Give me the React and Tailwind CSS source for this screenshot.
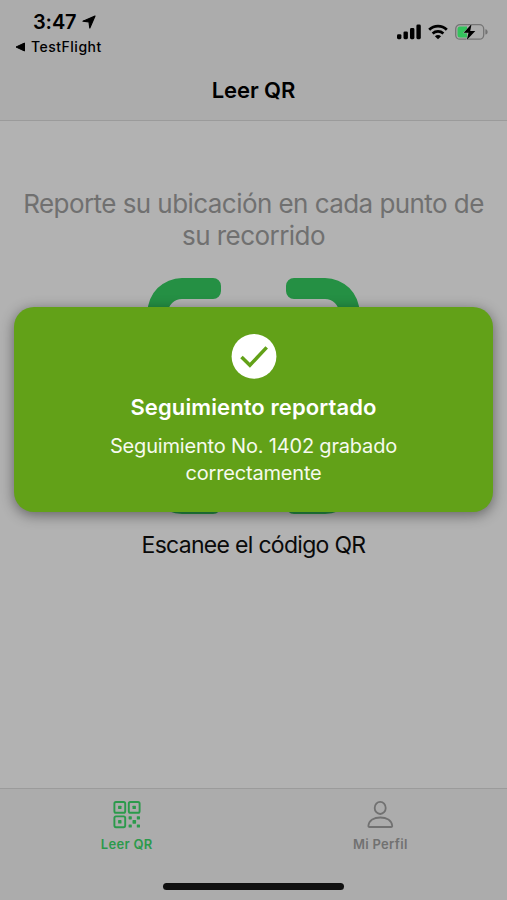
function StatusBar() {
  return (
    <div className="flex h-[60px] justify-between">
      <div className="pt-[10px] pl-[15px]">
        <div className="flex h-6 items-center gap-[5px] pl-[18px]">
          <span className="text-[20px] font-semibold tracking-[-0.1px]">3:47</span>
          <svg width="14" height="14" viewBox="0 0 14 14" className="mb-px">
            <path
              d="M13 1 L1 6.2 L7 7 L7.8 13 Z"
              fill="black"
              stroke="black"
              strokeWidth="1.2"
              strokeLinejoin="round"
            />
          </svg>
        </div>
        <div className="flex h-[25px] items-center gap-[5px]">
          <svg width="11" height="10" viewBox="0 0 11 10">
            <path d="M9.5 1 V9 L1 5 Z" fill="black" stroke="black" strokeLinejoin="round" />
          </svg>
          <span className="text-[14px] font-medium tracking-[0.5px]">TestFlight</span>
        </div>
      </div>
      <div className="flex h-[64px] items-center gap-[7px] pr-[19px]">
        <svg width="24" height="16" viewBox="0 0 24 16">
          <rect x="0" y="10.2" width="4.4" height="5" rx="1.4" />
          <rect x="6.5" y="7.4" width="4.4" height="7.8" rx="1.4" />
          <rect x="13" y="4" width="4.4" height="11.2" rx="1.4" />
          <rect x="19.4" y="0.5" width="4.4" height="14.7" rx="1.4" />
        </svg>
        <svg width="20" height="16" viewBox="0 0 20 16">
          <path d="M1.2 5.8 C6.2 1 13.8 1 18.8 5.8" fill="none" stroke="black" strokeWidth="2.8" />
          <path d="M4.6 9.5 C7.7 6.7 12.3 6.7 15.4 9.5" fill="none" stroke="black" strokeWidth="2.6" />
          <path d="M10 15.3 L6.9 12.2 Q10 9.8 13.1 12.2 Z" />
        </svg>
        <svg width="33" height="18" viewBox="0 0 33 18">
          <rect x="0.7" y="1.6" width="28" height="14.6" rx="4.3" fill="none" stroke="#747474" strokeWidth="1.3" />
          <path d="M30.4 6.2 C33.4 6.6 33.4 11.2 30.4 11.6 Z" fill="#747474" />
          <path d="M5 3.4 H12 V14.4 H5 Q2.5 14.4 2.5 11.9 V5.9 Q2.5 3.4 5 3.4 Z" fill="#34c25d" />
          <path d="M16.6 1 L8.7 9.8 H13.5 L11.8 17 L20.3 7.9 H15.2 Z" stroke="#acacac" strokeWidth="1" paintOrder="stroke" />
        </svg>
      </div>
    </div>
  );
}

const CORNER =
  "M67 1 A8 8 0 0 1 75 9 V14 A8 8 0 0 1 67 22 H36 A14 14 0 0 0 22 36 V67 A8 8 0 0 1 14 75 H9.5 A8 8 0 0 1 1.5 67 V35.5 A34.5 34.5 0 0 1 36 1 Z";

function ScanFrame() {
  return (
    <svg width="215" height="238" viewBox="0 0 215 238" fill="#259044" className="mx-auto block">
      <path d={CORNER} />
      <path d={CORNER} transform="translate(215 0) scale(-1 1)" />
      <path d={CORNER} transform="translate(0 238) scale(1 -1)" />
      <path d={CORNER} transform="translate(215 238) scale(-1 -1)" />
    </svg>
  );
}

function QrIcon() {
  return (
    <svg width="32" height="32" viewBox="0 0 32 32" fill="currentColor">
      <g fill="none" stroke="currentColor" strokeWidth="1.9">
        <rect x="3.4" y="3" width="10.8" height="10.8" rx="1.6" />
        <rect x="17.8" y="3" width="10.8" height="10.8" rx="1.6" />
        <rect x="3.4" y="17.4" width="10.8" height="10.8" rx="1.6" />
      </g>
      <rect x="7.1" y="6.7" width="3.4" height="3.4" rx="0.6" />
      <rect x="21.5" y="6.7" width="3.4" height="3.4" rx="0.6" />
      <rect x="7.1" y="21.1" width="3.4" height="3.4" rx="0.6" />
      <rect x="17.6" y="17.2" width="3.2" height="3.2" rx="0.6" />
      <rect x="25.8" y="17.2" width="3.2" height="3.2" rx="0.6" />
      <rect x="21.5" y="21.1" width="3.6" height="3.6" rx="0.6" />
      <rect x="17.6" y="25.4" width="3.2" height="3.2" rx="0.6" />
      <rect x="25.8" y="25.4" width="3.2" height="3.2" rx="0.6" />
    </svg>
  );
}

function PersonIcon() {
  return (
    <svg width="32" height="32" viewBox="0 0 32 32" fill="none" stroke="currentColor" strokeWidth="1.8">
      <ellipse cx="16.2" cy="8.9" rx="5.5" ry="6.1" />
      <path
        d="M5.6 28 Q4.2 28 4.4 26.6 C5.2 21.4 10 18.5 16.3 18.5 C22.6 18.5 27.4 21.4 28.2 26.6 Q28.4 28 27 28 Z"
        strokeLinejoin="round"
      />
    </svg>
  );
}

function Alert() {
  return (
    <div className="absolute top-[307px] left-[14px] flex h-[205px] w-[479px] flex-col items-center rounded-[20px] bg-[#62a118] pt-[26px] text-center text-white shadow-[0_3px_14px_rgba(0,0,0,0.45)]">
      <svg width="46" height="46" viewBox="0 0 46 46">
        <circle cx="23" cy="23.4" r="22.4" fill="white" />
        <path d="M10.5 23.9 L18.9 32.3 L35.7 14.4" fill="none" stroke="#62a118" strokeWidth="3.5" />
      </svg>
      <h2 className="mt-[13px] text-[22px] leading-[30px] font-semibold tracking-[0.1px] whitespace-nowrap">
        Seguimiento reportado
      </h2>
      <p className="mt-[11px] text-[20px] leading-[27px] tracking-[-0.18px] whitespace-nowrap text-[#f6faee]">
        Seguimiento No. 1402 grabado
        <br />
        correctamente
      </p>
    </div>
  );
}

export default function App() {
  return (
    <div className="relative flex h-[900px] w-[507px] flex-col overflow-hidden bg-[#b2b2b2] font-['Inter',sans-serif] text-black">
      <header className="h-[121px] border-b border-[#9b9b9b] bg-[#acacac]">
        <StatusBar />
        <h1 className="pt-[15px] text-center text-[22px] leading-[30px] font-semibold tracking-[-0.05px]">
          Leer QR
        </h1>
      </header>

      <main className="flex-1 pt-[67px] text-center">
        <p className="text-[26px] leading-[32px] tracking-[-0.56px] whitespace-nowrap text-[#707070]">
          Reporte su ubicación en cada punto de
          <br />
          su recorrido
        </p>
        <div className="pt-[25px]">
          <ScanFrame />
        </div>
        <p className="mt-[15px] text-[23px] leading-[30px] tracking-[-0.7px] text-[#0a0a0a]">
          Escanee el código QR
        </p>
      </main>

      <nav className="h-[112px] border-t border-[#9b9b9b] bg-[#acacac]">
        <div className="grid h-[66px] grid-cols-2 pt-[10px]">
          <div className="flex flex-col items-center text-[#2b9a4b]">
            <QrIcon />
            <span className="mt-[4px] text-[13px] leading-[18px] font-semibold tracking-[0.3px]">Leer QR</span>
          </div>
          <div className="flex flex-col items-center text-[#717171]">
            <PersonIcon />
            <span className="mt-[4px] text-[13px] leading-[18px] font-semibold tracking-[0.3px]">Mi Perfil</span>
          </div>
        </div>
        <div className="mx-auto mt-[28px] h-[7px] w-[181px] rounded-full bg-[#101010]" />
      </nav>

      <Alert />
    </div>
  );
}
